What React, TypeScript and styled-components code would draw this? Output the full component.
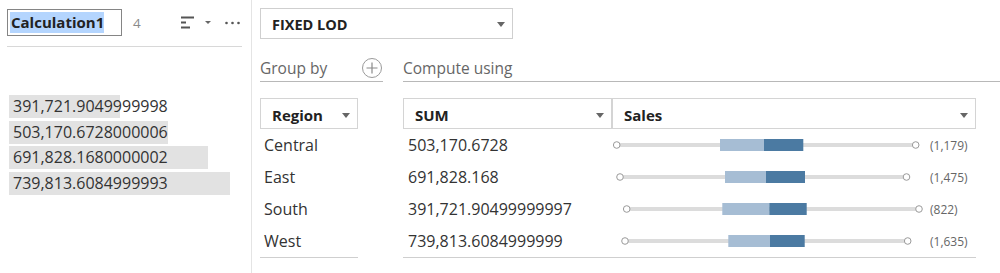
import React from 'react';
import styled, { createGlobalStyle } from 'styled-components';

const GlobalStyle = createGlobalStyle`
  html, body { margin: 0; padding: 0; background: #fff; }
  body { font-family: "Open Sans", "Noto Sans", Arial, sans-serif; color: #333; }
  * { box-sizing: border-box; }
`;

const Root = styled.div`
  display: flex;
  width: 1000px;
  height: 273px;
  overflow: hidden;
  background: #fff;
`;

const LeftPanel = styled.div`
  width: 252px;
  flex: none;
  border-right: 1px solid #e4e4e4;
  padding: 9px 9px 0 7px;
`;

const LeftHeader = styled.div`
  display: flex;
  align-items: center;
  height: 38px;
  padding-bottom: 10px;
  border-bottom: 1px solid #d8d8d8;
`;

const NameBox = styled.div`
  width: 115px;
  height: 27px;
  border: 1px solid #858585;
  padding: 2px;
  display: flex;
`;

const Selected = styled.span`
  background: #b4d5fe;
  font-weight: 700;
  font-size: 15px;
  line-height: 21px;
  padding: 0 0 0 1px;
  color: #222;
  white-space: nowrap;
`;

const Count = styled.span`
  margin-left: 11px;
  font-size: 13.5px;
  color: #8a8a8a;
`;

const IconBox = styled.span<{ $ml: number }>`
  display: inline-flex;
  margin-left: ${p => p.$ml}px;
`;

const Caret = styled.span<{ $w?: number; $h?: number }>`
  display: inline-block;
  width: 0;
  height: 0;
  border-left: ${p => (p.$w ?? 8) / 2}px solid transparent;
  border-right: ${p => (p.$w ?? 8) / 2}px solid transparent;
  border-top: ${p => p.$h ?? 5}px solid #666;
  flex: none;
`;

const ValueList = styled.div`
  margin: 48px 0 0 2px;
  display: flex;
  flex-direction: column;
  gap: 2.5px;
`;

const ValueRow = styled.div`
  display: grid;
  height: 23px;
  & > * { grid-area: 1 / 1; }
`;

const ValueBar = styled.div`
  background: #e2e2e2;
  height: 23px;
`;

const ValueText = styled.span`
  font-size: 16px;
  line-height: 23px;
  padding-left: 4px;
  white-space: nowrap;
  color: #333;
`;

const RightPanel = styled.div`
  flex: 1;
  padding: 8px 0 0 8px;
  display: flex;
  flex-direction: column;
`;

const LodSelect = styled.div`
  width: 253px;
  height: 31px;
  border: 1px solid #cfcfcf;
  display: flex;
  align-items: center;
  justify-content: space-between;
  padding: 2px 7px 0 11px;
  font-weight: 700;
  font-size: 14.5px;
  color: #222;
`;

const SectionRow = styled.div`
  display: flex;
  margin-top: 16px;
`;

const SectionTitle = styled.div<{ $width?: number; $ml?: number }>`
  height: 27px;
  ${p => (p.$width ? `width: ${p.$width}px;` : 'flex: 1;')}
  margin-left: ${p => p.$ml ?? 0}px;
  display: flex;
  align-items: center;
  justify-content: space-between;
  border-bottom: 1px solid #b8b8b8;
  font-size: 15.5px;
  line-height: 20px;
  color: #666;
`;

const Table = styled.div`
  display: flex;
  margin-top: 16px;
`;

const Column = styled.div<{ $width: number; $ml?: number }>`
  width: ${p => p.$width}px;
  margin-left: ${p => p.$ml ?? 0}px;
  border-bottom: 1px solid #cfcfcf;
  flex: none;
`;

const HeaderRow = styled.div`
  display: flex;
`;

const HeaderBox = styled.div<{ $width: number }>`
  width: ${p => p.$width}px;
  height: 31px;
  border: 1px solid #d4d4d4;
  display: flex;
  align-items: center;
  justify-content: space-between;
  padding: 3px 7px 0 11px;
  font-weight: 700;
  font-size: 15px;
  color: #222;
`;

const DataRow = styled.div`
  height: 32px;
  display: flex;
  align-items: center;
  font-size: 16px;
  color: #333;
  white-space: nowrap;
`;

const Cell = styled.div<{ $width?: number; $pl: number }>`
  ${p => (p.$width ? `width: ${p.$width}px;` : 'flex: 1;')}
  padding-left: ${p => p.$pl}px;
  display: flex;
  align-items: center;
  flex: none;
`;

const CountLabel = styled.span`
  font-size: 12px;
  color: #666;
`;

type Row = {
  region: string;
  sum: string;
  min: number;
  max: number;
  q1: number;
  med: number;
  q3: number;
  count: string;
};

const rows: Row[] = [
  { region: 'Central', sum: '503,170.6728', min: 4.7, max: 303.7, q1: 108, med: 152, q3: 191.3, count: '(1,179)' },
  { region: 'East', sum: '691,828.168', min: 8, max: 294.5, q1: 113, med: 154, q3: 193, count: '(1,475)' },
  { region: 'South', sum: '391,721.90499999997', min: 14.7, max: 307, q1: 110.3, med: 157.3, q3: 194.7, count: '(822)' },
  { region: 'West', sum: '739,813.6084999999', min: 13, max: 295.7, q1: 116.3, med: 158, q3: 192.7, count: '(1,635)' },
];

const values = [
  { text: '391,721.9049999998', width: 111 },
  { text: '503,170.6728000006', width: 159 },
  { text: '691,828.1680000002', width: 199 },
  { text: '739,813.6084999993', width: 221 },
];

const BoxPlot: React.FC<{ r: Row }> = ({ r }) => (
  <svg width={318} height={16} viewBox="0 0 318 16">
    <rect x={r.min} y={6} width={r.max - r.min} height={4} fill="#dcdcdc" />
    <rect x={r.q1} y={2} width={r.med - r.q1} height={12} fill="#a6bdd4" />
    <rect x={r.med} y={2} width={r.q3 - r.med} height={12} fill="#4b7aa2" />
    <circle cx={r.min} cy={8} r={3.3} fill="#fff" stroke="#9a9a9a" strokeWidth={1} />
    <circle cx={r.max} cy={8} r={3.3} fill="#fff" stroke="#9a9a9a" strokeWidth={1} />
  </svg>
);

const SortIcon = () => (
  <svg width={14} height={13} viewBox="0 0 14 13">
    <rect x={0} y={0.5} width={13} height={2} fill="#555" />
    <rect x={0} y={5.5} width={5} height={2} fill="#555" />
    <rect x={0} y={10.5} width={9} height={2} fill="#555" />
  </svg>
);

const Dots = () => (
  <svg width={16} height={4} viewBox="0 0 16 4">
    <circle cx={1.5} cy={2} r={1.3} fill="#555" />
    <circle cx={7.5} cy={2} r={1.3} fill="#555" />
    <circle cx={13.5} cy={2} r={1.3} fill="#555" />
  </svg>
);

const PlusCircle = () => (
  <svg width={22} height={22} viewBox="0 0 22 22">
    <circle cx={11} cy={11} r={9.5} fill="none" stroke="#9a9a9a" strokeWidth={1} />
    <path d="M11 5.5v11M5.5 11h11" stroke="#8a8a8a" strokeWidth={1.2} />
  </svg>
);

export default function App() {
  return (
    <>
      <GlobalStyle />
      <Root>
        <LeftPanel>
          <LeftHeader>
            <NameBox>
              <Selected>Calculation1</Selected>
            </NameBox>
            <Count>4</Count>
            <IconBox $ml={40}>
              <SortIcon />
            </IconBox>
            <IconBox $ml={10}>
              <Caret $w={6} $h={3} />
            </IconBox>
            <IconBox $ml={14}>
              <Dots />
            </IconBox>
          </LeftHeader>
          <ValueList>
            {values.map(v => (
              <ValueRow key={v.text}>
                <ValueBar style={{ width: v.width }} />
                <ValueText>{v.text}</ValueText>
              </ValueRow>
            ))}
          </ValueList>
        </LeftPanel>
        <RightPanel>
          <LodSelect>
            <span>FIXED LOD</span>
            <Caret />
          </LodSelect>
          <SectionRow>
            <SectionTitle $width={123}>
              <span>Group by</span>
              <PlusCircle />
            </SectionTitle>
            <SectionTitle $ml={20}>
              <span>Compute using</span>
            </SectionTitle>
          </SectionRow>
          <Table>
            <Column $width={98}>
              <HeaderBox $width={98}>
                <span>Region</span>
                <Caret />
              </HeaderBox>
              {rows.map(r => (
                <DataRow key={r.region}>
                  <Cell $pl={4}>{r.region}</Cell>
                </DataRow>
              ))}
            </Column>
            <Column $width={573} $ml={45}>
              <HeaderRow>
                <HeaderBox $width={209}>
                  <span>SUM</span>
                  <Caret />
                </HeaderBox>
                <HeaderBox $width={364}>
                  <span>Sales</span>
                  <Caret />
                </HeaderBox>
              </HeaderRow>
              {rows.map(r => (
                <DataRow key={r.region}>
                  <Cell $width={209} $pl={5}>{r.sum}</Cell>
                  <Cell $width={364} $pl={0}>
                    <BoxPlot r={r} />
                    <CountLabel>{r.count}</CountLabel>
                  </Cell>
                </DataRow>
              ))}
            </Column>
          </Table>
        </RightPanel>
      </Root>
    </>
  );
}
